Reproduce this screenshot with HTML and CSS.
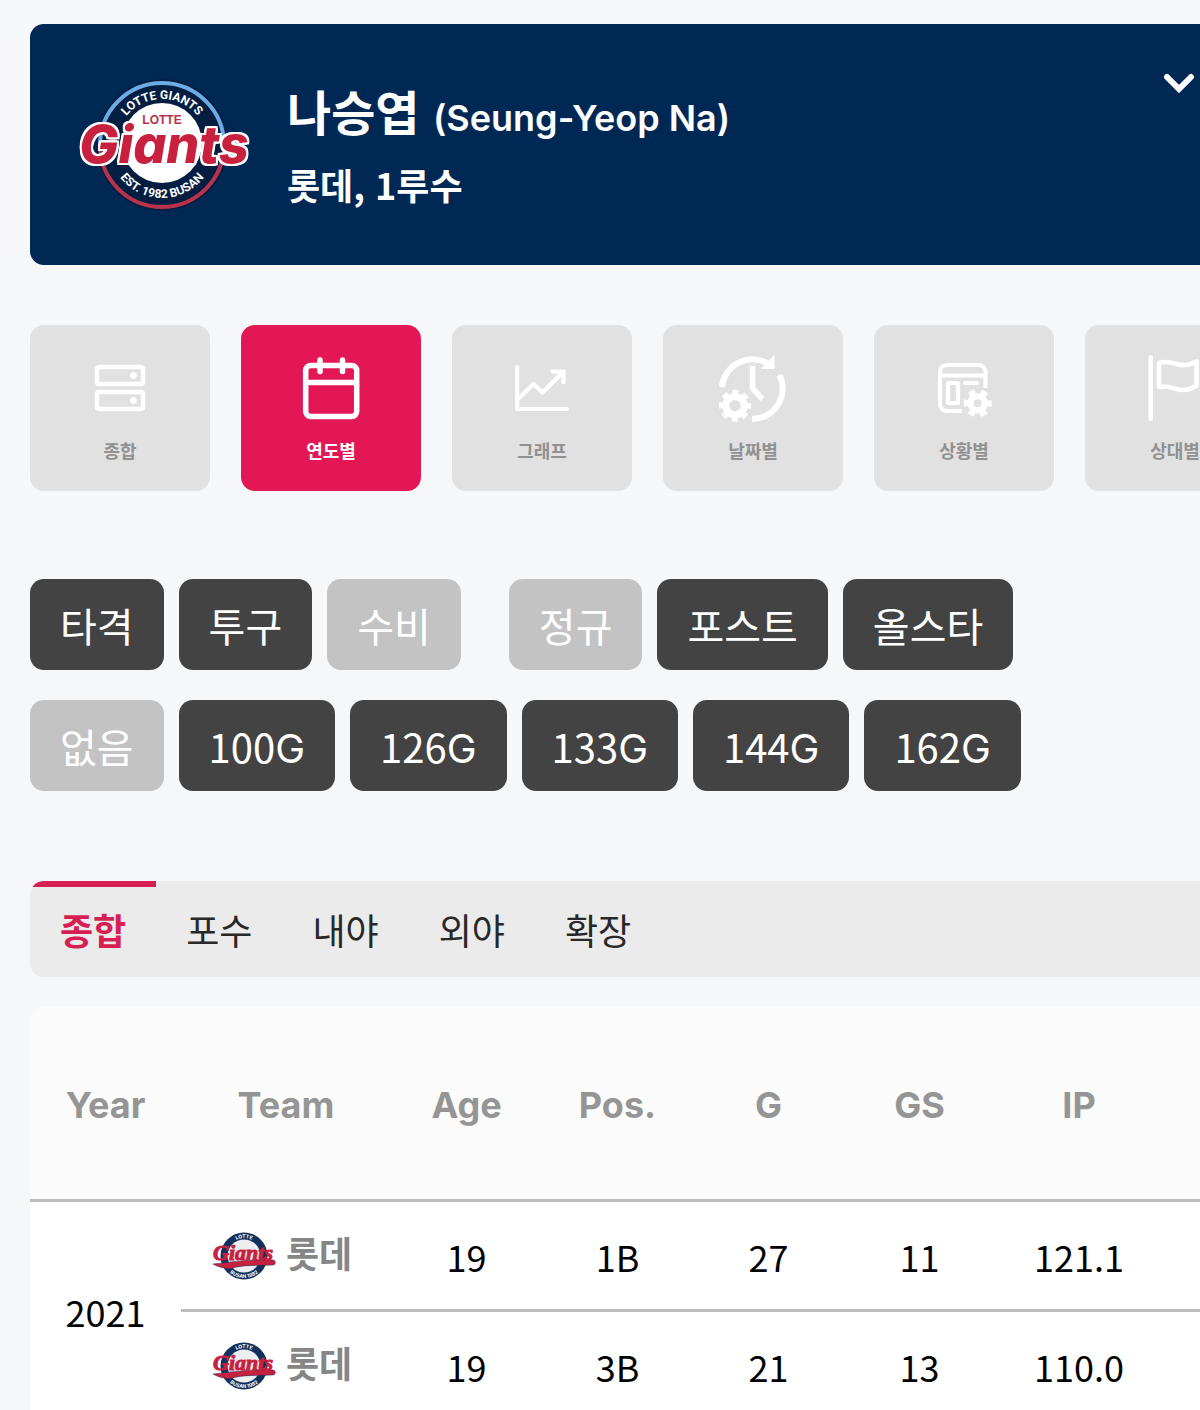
FILE: index.html
```
<!DOCTYPE html>
<html lang="ko">
<head>
  <meta charset="UTF-8">
  <meta name="viewport" content="width=device-width, initial-scale=1.0">
  <title>나승엽 (Seung-Yeop Na)</title>
  <link rel="stylesheet" href="styles.css">
</head>
<body>
  <div class="container">
    <header class="player">
      <svg class="player-logo" viewBox="0 0 184 136" role="img" aria-label="Lotte Giants">
        <circle cx="89" cy="68" r="66" fill="#041e42"/>
        <path d="M27 68a62 62 0 0 1 124 0" fill="none" stroke="#6cace4" stroke-width="4"/>
        <path d="M27 68a62 62 0 0 0 124 0" fill="none" stroke="#b8324e" stroke-width="4"/>
        <circle cx="89" cy="66" r="40" fill="#fff"/>
        <path id="ring-top" d="M43 68a46 46 0 0 1 92 0" fill="none"/>
        <path id="ring-bottom" d="M36 68a53 53 0 0 0 106 0" fill="none"/>
        <text class="ring"><textPath href="#ring-top" startOffset="50%" text-anchor="middle">LOTTE GIANTS</textPath></text>
        <text class="ring"><textPath href="#ring-bottom" startOffset="50%" text-anchor="middle">EST. 1982 BUSAN</textPath></text>
        <text class="giants" x="91" y="86" text-anchor="middle">Giants</text>
        <text class="lotte" x="89" y="47" text-anchor="middle">LOTTE</text>
      </svg>
      <div class="player-info">
        <h1>나승엽 <span class="en-name">(Seung-Yeop Na)</span></h1>
        <p>롯데, 1루수</p>
      </div>
      <button class="toggle" aria-label="펼치기">
        <svg viewBox="0 0 32 20"><path d="M4 4l12 12 12-12" fill="none" stroke="#fff" stroke-width="6" stroke-linecap="round"/></svg>
      </button>
    </header>

    <nav class="menu">
      <a href="#">
        <svg viewBox="0 0 70 70" fill="none" stroke="#fff" stroke-width="4.500">
          <rect x="12" y="12" width="46" height="17" rx="2"/><rect x="12" y="37" width="46" height="17" rx="2"/>
          <circle cx="48.500" cy="20.500" r="3.400" fill="#fff" stroke="none"/><circle cx="48.500" cy="45.500" r="3.400" fill="#fff" stroke="none"/>
        </svg>
        종합
      </a>
      <a href="#" class="active">
        <svg viewBox="0 0 70 70" fill="none" stroke="#fff" stroke-width="5.500" stroke-linecap="round">
          <rect x="9.700" y="10.500" width="51" height="51" rx="5"/><path d="M10 27.500h50M24 5v11.500M46.500 5v11.500"/>
        </svg>
        연도별
      </a>
      <a href="#">
        <svg viewBox="0 0 70 70" fill="none" stroke="#fff" stroke-width="4.200" stroke-linecap="round" stroke-linejoin="round">
          <path d="M10.200 12v42h49.500"/><path d="M11 44l15.500-15 9 8.500 20-20"/><path d="M45.500 16.700h11v10.500" stroke-linejoin="miter"/>
        </svg>
        그래프
      </a>
      <a href="#">
        <svg viewBox="0 0 70 70" fill="none" stroke="#fff" stroke-width="6">
          <path d="M4 32a30.500 30.500 0 0 1 48-22"/>
          <path d="M56.500 0v14H42.500z" fill="#fff" stroke="none"/>
          <path d="M61.500 20a30.500 30.500 0 0 1-27.500 44"/>
          <path d="M34.500 11v22.500l10 10.500" stroke-width="5.500"/>
          <circle cx="17" cy="50.700" r="9.200" stroke-width="7"/>
          <circle cx="17" cy="50.700" r="14" stroke-width="4" stroke-dasharray="6 4.996" stroke-dashoffset="3"/>
        </svg>
        날짜별
      </a>
      <a href="#">
        <svg viewBox="0 0 70 70" fill="none" stroke="#fff" stroke-width="4.200" stroke-linejoin="round">
          <path d="M33 56H18a7 7 0 0 1-7-7V17a7 7 0 0 1 7-7h31.500a7 7 0 0 1 7 7v16M11 20.500h46"/>
          <rect x="19" y="28" width="10" height="20"/><path d="M36 28h12" stroke-linecap="round"/>
          <circle cx="48.700" cy="48.300" r="7.200" stroke-width="6.400"/>
          <circle cx="48.700" cy="48.300" r="11.500" stroke-width="5" stroke-dasharray="6.400 5.643" stroke-dashoffset="3.200"/>
        </svg>
        상황별
      </a>
      <a href="#">
        <svg viewBox="0 0 70 70" fill="none" stroke="#fff" stroke-width="4.700" stroke-linecap="round" stroke-linejoin="round">
          <path d="M10.700 2.500v61.500"/><path d="M19 8c14-5 20 8 37.500-1.500v24c-17 11-23-2-37.500 1.500z"/>
        </svg>
        상대별
      </a>
    </nav>

    <div class="filters">
      <div class="filter-row">
        <button>타격</button>
        <button>투구</button>
        <button class="off">수비</button>
        <button class="off group">정규</button>
        <button>포스트</button>
        <button>올스타</button>
      </div>
      <div class="filter-row">
        <button class="off">없음</button>
        <button>100<span>G</span></button>
        <button>126<span>G</span></button>
        <button>133<span>G</span></button>
        <button>144<span>G</span></button>
        <button>162<span>G</span></button>
      </div>
    </div>

    <nav class="tabs">
      <a href="#" class="active">종합</a>
      <a href="#">포수</a>
      <a href="#">내야</a>
      <a href="#">외야</a>
      <a href="#">확장</a>
    </nav>

    <table>
      <colgroup>
        <col class="c-year"><col class="c-team"><col class="c-num"><col class="c-num"><col class="c-num"><col class="c-num"><col class="c-ip"><col>
      </colgroup>
      <thead>
        <tr><th>Year</th><th>Team</th><th>Age</th><th>Pos.</th><th>G</th><th>GS</th><th>IP</th><th></th></tr>
      </thead>
      <tbody>
        <tr>
          <td rowspan="2">2021</td>
          <td>
            <a class="team" href="#">
              <svg viewBox="0 0 64 48">
                <circle cx="32" cy="24" r="23.500" fill="#12305c"/>
                <circle cx="32" cy="24" r="16.500" fill="#eceef1"/>
                <path id="small-top" d="M14 24a18 18 0 0 1 36 0" fill="none"/>
                <path id="small-bottom" d="M10 24a22 22 0 0 0 44 0" fill="none"/>
                <text class="ring-small"><textPath href="#small-top" startOffset="50%" text-anchor="middle">LOTTE</textPath></text>
                <text class="ring-small"><textPath href="#small-bottom" startOffset="50%" text-anchor="middle">BUSAN 1982</textPath></text>
                <path d="M1 32c18-2 38-5 60-4 3 0 3 5 0 5-15 1-30-1-44 4-6-1-11-2-16-5z" fill="#c8203f" stroke="#12305c" stroke-width=".5"/>
                <text class="giants-small" x="31" y="28" text-anchor="middle">Giants</text>
              </svg>
              롯데
            </a>
          </td>
          <td>19</td><td>1B</td><td>27</td><td>11</td><td>121.1</td><td></td>
        </tr>
        <tr>
          <td>
            <a class="team" href="#">
              <svg viewBox="0 0 64 48">
                <circle cx="32" cy="24" r="23.500" fill="#12305c"/>
                <circle cx="32" cy="24" r="16.500" fill="#eceef1"/>
                <text class="ring-small"><textPath href="#small-top" startOffset="50%" text-anchor="middle">LOTTE</textPath></text>
                <text class="ring-small"><textPath href="#small-bottom" startOffset="50%" text-anchor="middle">BUSAN 1982</textPath></text>
                <path d="M1 32c18-2 38-5 60-4 3 0 3 5 0 5-15 1-30-1-44 4-6-1-11-2-16-5z" fill="#c8203f" stroke="#12305c" stroke-width=".5"/>
                <text class="giants-small" x="31" y="28" text-anchor="middle">Giants</text>
              </svg>
              롯데
            </a>
          </td>
          <td>19</td><td>3B</td><td>21</td><td>13</td><td>110.0</td><td></td>
        </tr>
      </tbody>
    </table>
  </div>
</body>
</html>
```

FILE: styles.css
```
* { box-sizing: border-box; }
body { font-family: "Noto Sans CJK KR", sans-serif; margin: 0; background: #f6f7f9; overflow-x: hidden; }
a { color: inherit; text-decoration: none; }
button { font-family: inherit; border: 0; cursor: pointer; }
.container { padding: 24px 0 0 30px; overflow: hidden; }

/* player header */
.player { display: flex; align-items: center; height: 241px; padding: 0 5px 0 43px; background: #002855; color: #fff; border-radius: 14px 0 0 14px; }
.player-logo { width: 184px; height: 136px; flex: none; overflow: visible; }
.player-info { flex: 1; padding: 6px 0 0 30px; }
.player h1 { margin: 0; font-size: 48px; line-height: 64px; font-weight: 700; }
.en-name { font-family: Inter, sans-serif; font-size: 36px; font-weight: 600; }
.player p { margin: 0; font-size: 36px; line-height: 68px; font-weight: 700; }
.toggle { align-self: flex-start; margin-top: 49px; padding: 0; background: none; }
.toggle svg { display: block; width: 32px; height: 20px; }
.ring { font: 700 12px Roboto, sans-serif; fill: #fff; }
.lotte { font: 700 12px "Liberation Sans", sans-serif; fill: #b8324e; }
.giants {
  font: italic 800 52px Inter, sans-serif;
  fill: #c8203f;
  filter: drop-shadow(2px 0 0 #fff) drop-shadow(-2px 0 0 #fff) drop-shadow(0 2px 0 #fff) drop-shadow(0 -2px 0 #fff);
}
.ring-small { font: 700 5px Inter, sans-serif; fill: #fff; }
.giants-small { font: italic 700 22px "Liberation Serif", serif; fill: #c8203f; stroke: #c8203f; stroke-width: 1px; }

/* icon menu */
.menu { display: flex; gap: 31px; margin-top: 60px; }
.menu a { flex: none; display: flex; flex-direction: column; align-items: center; width: 180px; height: 166px; padding-top: 30px; border-radius: 14px; background: #e1e1e1; color: #919191; font-size: 18px; line-height: 26px; font-weight: 700; }
.menu svg { width: 70px; height: 70px; margin-bottom: 12px; }
.menu .active { background: #e31755; color: #fff; }

/* filter buttons */
.filters { display: flex; flex-direction: column; gap: 30px; margin-top: 88px; }
.filter-row { display: flex; gap: 15px; }
.filter-row button { height: 91px; padding: 0 30px; border-radius: 14px; background: #434343; color: #fff; font-size: 40px; }
.filter-row span { font-family: Inter, sans-serif; }
.filter-row .off { background: #c3c3c3; }
.filter-row .group { margin-left: 33px; }

.tabs { display: flex; height: 96px; margin-top: 90px; background: #ebebeb; border-radius: 14px 0 0 14px; overflow: hidden; font-size: 36px; line-height: 84px; color: #282828; }
.tabs a { padding: 0 30px; border-top: 6px solid transparent; }
.tabs .active { border-color: #d81f54; color: #d81f54; font-weight: 700; }

/* stats table */
table { width: 100%; margin-top: 30px; table-layout: fixed; border-collapse: separate; border-spacing: 0; background: #fff; border-radius: 14px 0 0 0; overflow: hidden; font-size: 36px; color: #000; }
.c-year, .c-num { width: 151px; }
.c-team { width: 210px; }
.c-ip { width: 168px; }
th, td { padding: 0; text-align: center; border-bottom: 3px solid #bdbdbd; }
th { height: 195px; padding-top: 4px; background: #fbfbfb; color: #959595; font-family: Inter, sans-serif; font-weight: 700; }
td { height: 110px; }
.team { display: flex; align-items: flex-start; justify-content: center; gap: 10px; padding-right: 8px; color: #868686; font-weight: 700; line-height: 40px; }
.team svg { width: 64px; height: 48px; overflow: visible; }
```
